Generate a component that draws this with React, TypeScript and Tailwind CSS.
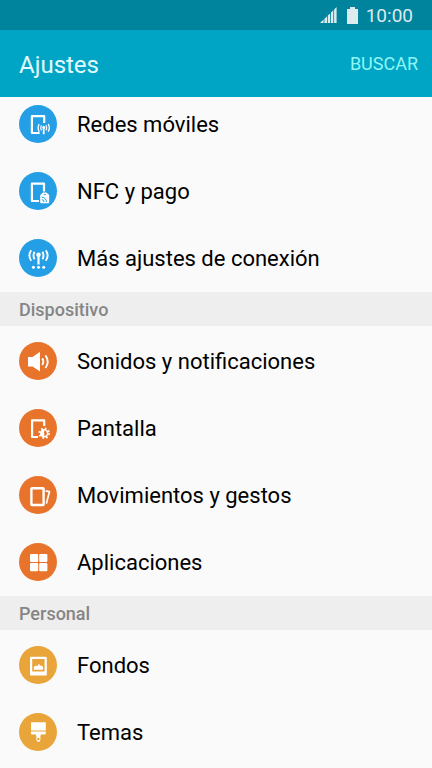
import React from 'react'

interface SettingItem {
    label: string,
    icon: React.ReactNode
}

const RedesIcon = () => (
    <g fill="none" stroke="white">
        <path d="M20.6 28H12.9V11.2H25.2V18" strokeWidth="2.2" strokeLinejoin="round" />
        <circle cx="24.7" cy="22.4" r="1.2" fill="white" strokeWidth="0.6" />
        <path d="M24.7 23V29.2" strokeWidth="1.8" />
        <path d="M22.4 20.2Q21 22.8 22.4 25.4M27 20.2Q28.4 22.8 27 25.4" strokeWidth="1.2" />
        <path d="M20.2 19Q18 22.8 20.2 26.8M29.2 19Q31.4 22.8 29.2 26.8" strokeWidth="1.3" />
    </g>
)

const NfcIcon = () => (
    <g fill="none" stroke="white">
        <path d="M20 29H12.9V11.6H25V19.4" strokeWidth="2.2" strokeLinejoin="round" />
        <path d="M24 20.4H27.4L30.2 23V30.4Q30.2 31.2 29.4 31.2H22Q21.2 31.2 21.2 30.4V23Z" fill="white" stroke="none" />
        <g stroke="#249fe6">
            <path d="M22.8 27.6Q24.8 27.8 25 30M22.8 25.2Q27.2 25.6 27.4 30" strokeWidth="1" />
            <path d="M24.8 22.6H26.8" strokeWidth="1" />
        </g>
    </g>
)

const ConexionIcon = () => (
    <g fill="none" stroke="white">
        <circle cx="19.5" cy="15.8" r="2.3" fill="white" stroke="none" />
        <path d="M19.5 16V25.4" strokeWidth="2.2" />
        <path d="M15.6 12.8Q13.4 16.4 15.6 20.2M23.4 12.8Q25.6 16.4 23.4 20.2" strokeWidth="1.9" />
        <path d="M12.2 11.2Q8.6 16.4 12.2 21.8M26.8 11.2Q30.4 16.4 26.8 21.8" strokeWidth="1.9" />
        <g fill="white" stroke="none">
            <circle cx="14.4" cy="28.2" r="1.5" />
            <circle cx="19.5" cy="28.2" r="1.5" />
            <circle cx="24.7" cy="28.2" r="1.5" />
        </g>
    </g>
)

const SonidoIcon = () => (
    <g fill="none" stroke="white">
        <path d="M9 15H13.6L21 9.8V29.6L13.6 24.4H9Z" fill="white" stroke="none" />
        <path d="M23.2 16.4Q25.4 19.6 23.2 23" strokeWidth="1.9" />
        <path d="M26.4 13.4Q31 19.6 26.4 26" strokeWidth="1.9" />
    </g>
)

const PantallaIcon = () => (
    <g fill="none" stroke="white">
        <path d="M19 28H13.1V11.4H25.2V17" strokeWidth="2.2" strokeLinejoin="round" />
        <circle cx="25.2" cy="24.2" r="3.4" strokeWidth="1.6" />
        <path d="M25.2 21A3.2 3.2 0 0 0 25.2 27.4Z" fill="white" stroke="none" />
        <circle cx="25.2" cy="24.2" r="4.8" strokeWidth="2" strokeDasharray="1.7 2.07" />
    </g>
)

const GestosIcon = () => (
    <g fill="none" stroke="white">
        <rect x="12.4" y="12.2" width="12.2" height="16.8" rx="0.6" strokeWidth="2.4" />
        <path d="M26.6 14.8L30.4 15.6L27.4 27.6" strokeWidth="1.7" />
    </g>
)

const AppsIcon = () => (
    <g fill="white">
        <rect x="11" y="11" width="8.2" height="8.1" rx="1" />
        <rect x="20.2" y="11" width="8.2" height="8.1" rx="1" />
        <rect x="11" y="20.1" width="8.2" height="8.1" rx="1" />
        <rect x="20.2" y="20.1" width="8.2" height="8.1" rx="1" />
    </g>
)

const FondosIcon = () => (
    <g fill="white">
        <path fillRule="evenodd" d="M12.2 10.8H26.6Q27.8 10.8 27.8 12V28.4Q27.8 29.6 26.6 29.6H12.2Q11 29.6 11 28.4V12Q11 10.8 12.2 10.8ZM13.2 13V25.4H25.6V13Z" />
        <path d="M14.8 23.8V21L16.8 19.4L18.2 20.2L20 17.8L21.4 20L22.4 19.2L24 21V23.8Z" />
    </g>
)

const TemasIcon = () => (
    <g fill="white">
        <path d="M12.6 9.2H26.2Q26.8 9.2 26.8 9.8V17.4H12V9.8Q12 9.2 12.6 9.2Z" />
        <path fillRule="evenodd" d="M12 18.6H26.8V20.6Q26.8 21.4 26 21.4H22L21.4 23V26.8Q21.4 28.9 19.4 28.9Q17.4 28.9 17.4 26.8V23L16.8 21.4H12.8Q12 21.4 12 20.6ZM19.4 24.8A1.2 1.2 0 1 0 19.4 27.2A1.2 1.2 0 1 0 19.4 24.8Z" />
    </g>
)

const conexiones: SettingItem[] = [
    { label: 'Redes móviles', icon: <RedesIcon /> },
    { label: 'NFC y pago', icon: <NfcIcon /> },
    { label: 'Más ajustes de conexión', icon: <ConexionIcon /> },
]

const dispositivo: SettingItem[] = [
    { label: 'Sonidos y notificaciones', icon: <SonidoIcon /> },
    { label: 'Pantalla', icon: <PantallaIcon /> },
    { label: 'Movimientos y gestos', icon: <GestosIcon /> },
    { label: 'Aplicaciones', icon: <AppsIcon /> },
]

const personal: SettingItem[] = [
    { label: 'Fondos', icon: <FondosIcon /> },
    { label: 'Temas', icon: <TemasIcon /> },
]

interface ListProps {
    items: SettingItem[],
    color: string
}
const SettingsList: React.FC<ListProps> = ({ items, color }) => {
    return (
        <ul className="py-px">
            {items.map((item) =>
                <li key={item.label}>
                    <button type="button" className="flex h-[67px] w-full items-center gap-5 px-[19px] text-left">
                        <svg viewBox="0 0 38 38" className={'h-[38px] w-[38px] shrink-0 rounded-full ' + color} aria-hidden="true">
                            {item.icon}
                        </svg>
                        <span className="pt-0.5 text-[22px] leading-7 text-black">{item.label}</span>
                    </button>
                </li>
            )}
        </ul>
    )
}

const SectionTitle: React.FC<{ title: string }> = ({ title }) => (
    <h2 className="flex h-[34px] items-center bg-[#eeeeee] px-[19px] pt-0.5 text-lg font-medium text-[#858585]">
        {title}
    </h2>
)

const App = () => {
    return (
        <div className="min-h-screen bg-[#fafafa] font-[Roboto,sans-serif]">
            <div className="relative z-10">
                <div className="flex h-[30px] items-center justify-end bg-[#00839d] px-[19px] text-[#dcebee]">
                    <svg viewBox="0 0 17 17" className="h-[17px] w-[17px]" fill="currentColor" aria-hidden="true">
                        <path d="M0 16L3.6 12.6V16ZM4.4 11.8L7 9.4V16H4.4ZM7.8 8.6L10.2 6.4V16H7.8ZM11 5.4L13.3 3.2V16H11ZM14.1 2.4L16.6 0V16H14.1Z" />
                    </svg>
                    <svg viewBox="0 0 11 17" className="ml-2.5 h-[17px] w-[11px]" fill="currentColor" aria-hidden="true">
                        <path d="M3 0H8V2H11V17H0V2H3Z" />
                    </svg>
                    <span className="ml-2 pt-0.5 text-[19px] leading-6">10:00</span>
                </div>
                <header className="flex h-[67px] items-center justify-between bg-[#00a5c5] pr-[14px] pl-[19px]">
                    <h1 className="pt-0.5 text-2xl text-[#e2fbff]">Ajustes</h1>
                    <button type="button" className="text-lg text-[#8ff6f6]">BUSCAR</button>
                </header>
            </div>
            <main className="-mt-2">
                <SettingsList items={conexiones} color="bg-[#249fe6]" />
                <SectionTitle title="Dispositivo" />
                <SettingsList items={dispositivo} color="bg-[#e8742c]" />
                <SectionTitle title="Personal" />
                <SettingsList items={personal} color="bg-[#e9a53a]" />
            </main>
        </div>
    )
}

export default App
